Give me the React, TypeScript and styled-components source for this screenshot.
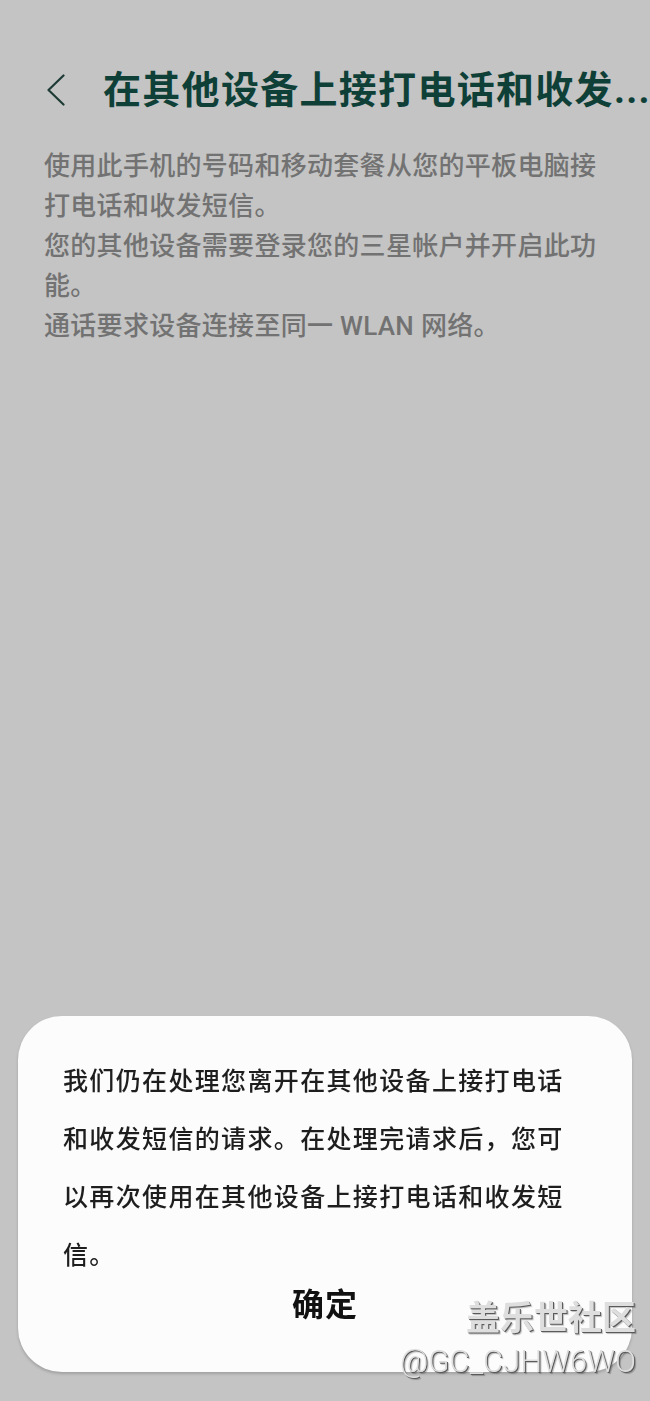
import React from 'react'
import styled, { createGlobalStyle } from 'styled-components'

const GlobalStyle = createGlobalStyle`
  html, body {
    margin: 0;
    padding: 0;
    background: #c4c4c4;
  }
  body {
    font-family: Roboto, 'Noto Sans CJK SC', sans-serif;
  }
`

const StyledPage = styled.div`
  min-height: 1401px;
  background-color: #c4c4c4;
  box-sizing: border-box;
`

const Header = styled.div`
  display: flex;
  align-items: center;
  height: 60px;
  padding: 60px 2px 0 47px;
`

const BackButton = styled.div`
  display: flex;
  align-items: center;
  width: 56px;
  flex-shrink: 0;
`

const Title = styled.div`
  flex: 1;
  min-width: 0;
  font-size: 38px;
  font-weight: 700;
  letter-spacing: 1.3px;
  line-height: 60px;
  color: #0f4038;
  white-space: nowrap;
`

const Description = styled.div`
  padding: 26px 44px 0 44px;
`

const Paragraph = styled.p`
  margin: 0;
  font-size: 26px;
  font-weight: 500;
  letter-spacing: 0.3px;
  line-height: 40px;
  color: #727272;
`

const Overlay = styled.div`
  position: fixed;
  inset: 0;
  display: flex;
  align-items: flex-end;
  padding: 0 18px 29px;
`

const Dialog = styled.div`
  width: 100%;
  box-sizing: border-box;
  background-color: #fcfcfc;
  border-radius: 44px;
  box-shadow: 0 2px 3px rgba(0, 0, 0, 0.18);
  padding: 37px 45px 47px;
`

const DialogText = styled.div`
  font-size: 25px;
  font-weight: 500;
  letter-spacing: 1.35px;
  line-height: 58px;
  color: #1e1e1e;
`

const DialogActions = styled.div`
  display: flex;
  justify-content: center;
`

const ConfirmButton = styled.div`
  font-size: 32px;
  font-weight: 700;
  line-height: 40px;
  color: #111;
  letter-spacing: 1px;
`

const Watermark = styled.div`
  position: fixed;
  right: 14px;
  bottom: 17px;
  display: flex;
  flex-direction: column;
  align-items: flex-end;
  pointer-events: none;
`

const WatermarkLine = styled.div<{ size: number; weight: number }>`
  font-size: ${(p) => p.size}px;
  font-weight: ${(p) => p.weight};
  line-height: 44px;
  color: #dedede;
  text-shadow: 1px 1px 0 #5a5a5a, 2px 2px 1px rgba(0, 0, 0, 0.25);
`

const ChevronLeft: React.FC = () => (
  <svg width="20" height="32" viewBox="0 0 20 32" fill="none">
    <polyline points="16.5,1.5 1.5,16 16.5,30.5" stroke="#1f3b35" strokeWidth="2.2" strokeLinecap="round" strokeLinejoin="round" />
  </svg>
)

const App: React.FC = () => {
  return (
    <>
      <GlobalStyle />
      <StyledPage>
        <Header>
          <BackButton>
            <ChevronLeft />
          </BackButton>
          <Title>在其他设备上接打电话和收发...</Title>
        </Header>
        <Description>
          <Paragraph>使用此手机的号码和移动套餐从您的平板电脑接打电话和收发短信。</Paragraph>
          <Paragraph>您的其他设备需要登录您的三星帐户并开启此功能。</Paragraph>
          <Paragraph>通话要求设备连接至同一 WLAN 网络。</Paragraph>
        </Description>
      </StyledPage>
      <Overlay>
        <Dialog>
          <DialogText>
            我们仍在处理您离开在其他设备上接打电话和收发短信的请求。在处理完请求后，您可以再次使用在其他设备上接打电话和收发短信。
          </DialogText>
          <DialogActions>
            <ConfirmButton>确定</ConfirmButton>
          </DialogActions>
        </Dialog>
      </Overlay>
      <Watermark>
        <WatermarkLine size={34} weight={700}>盖乐世社区</WatermarkLine>
        <WatermarkLine size={31} weight={300}>@GC_CJHW6WO</WatermarkLine>
      </Watermark>
    </>
  )
}

export default App
